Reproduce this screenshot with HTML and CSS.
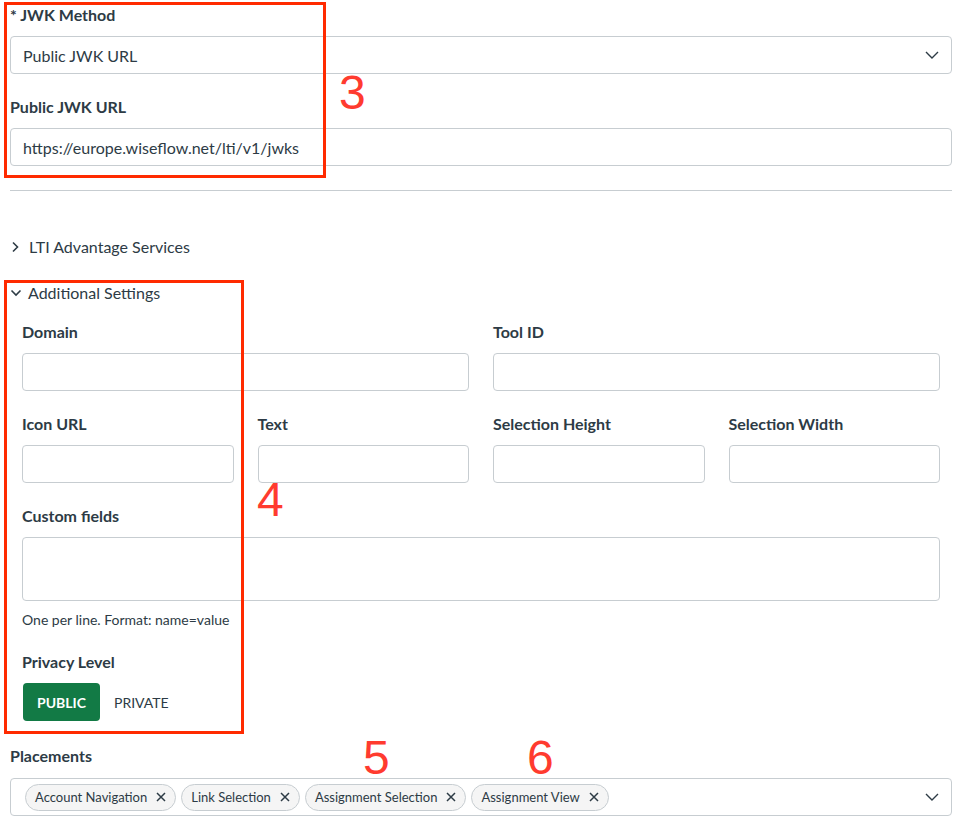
FILE: index.html
```html
<!DOCTYPE html>
<html>
<head>
    <title>LTI Key Settings</title>
    <link rel="stylesheet" href="styles.css">
</head>
<body>
    <div class="page">
        <div class="field">
            <label class="label">* JWK Method</label>
            <div class="select">
                <span>Public JWK URL</span>
                <svg class="chev" width="14" height="8" viewBox="0 0 14 8"><path d="M1 1l6 6 6-6" fill="none" stroke="#2d3b45" stroke-width="1.4"/></svg>
            </div>
        </div>
        <div class="field">
            <label class="label">Public JWK URL</label>
            <div class="input">https://europe.wiseflow.net/lti/v1/jwks</div>
        </div>

        <hr class="divider">

        <div class="toggle">
            <svg width="8" height="12" viewBox="0 0 8 12"><path d="M2 1.5l4.5 4.5L2 10.5" fill="none" stroke="#2d3b45" stroke-width="1.6"/></svg>
            <span>LTI Advantage Services</span>
        </div>

        <div class="toggle open">
            <svg width="12" height="8" viewBox="0 0 12 8"><path d="M1.5 1.5L6 6l4.5-4.5" fill="none" stroke="#2d3b45" stroke-width="1.6"/></svg>
            <span>Additional Settings</span>
        </div>

        <div class="settings">
            <div class="row two">
                <div class="field">
                    <label class="label">Domain</label>
                    <div class="input"></div>
                </div>
                <div class="field">
                    <label class="label">Tool ID</label>
                    <div class="input"></div>
                </div>
            </div>
            <div class="row four">
                <div class="field">
                    <label class="label">Icon URL</label>
                    <div class="input"></div>
                </div>
                <div class="field">
                    <label class="label">Text</label>
                    <div class="input"></div>
                </div>
                <div class="field">
                    <label class="label">Selection Height</label>
                    <div class="input"></div>
                </div>
                <div class="field">
                    <label class="label">Selection Width</label>
                    <div class="input"></div>
                </div>
            </div>
            <div class="field">
                <label class="label">Custom fields</label>
                <div class="textarea"></div>
                <div class="hint">One per line. Format: name=value</div>
            </div>
            <div class="field last">
                <label class="label">Privacy Level</label>
                <div class="privacy">
                    <button class="btn active">PUBLIC</button>
                    <button class="btn">PRIVATE</button>
                </div>
            </div>
        </div>

        <div class="field">
            <label class="label wide">Placements</label>
            <div class="select multi">
                <div class="tags">
                    <span class="tag">Account Navigation <svg width="10" height="10" viewBox="0 0 10 10"><path d="M1 1l8 8M9 1l-8 8" stroke="#2d3b45" stroke-width="1.5"/></svg></span>
                    <span class="tag">Link Selection <svg width="10" height="10" viewBox="0 0 10 10"><path d="M1 1l8 8M9 1l-8 8" stroke="#2d3b45" stroke-width="1.5"/></svg></span>
                    <span class="tag">Assignment Selection <svg width="10" height="10" viewBox="0 0 10 10"><path d="M1 1l8 8M9 1l-8 8" stroke="#2d3b45" stroke-width="1.5"/></svg></span>
                    <span class="tag">Assignment View <svg width="10" height="10" viewBox="0 0 10 10"><path d="M1 1l8 8M9 1l-8 8" stroke="#2d3b45" stroke-width="1.5"/></svg></span>
                </div>
                <svg class="chev" width="14" height="8" viewBox="0 0 14 8"><path d="M1 1l6 6 6-6" fill="none" stroke="#2d3b45" stroke-width="1.4"/></svg>
            </div>
        </div>
    </div>

    <div class="mark box3"></div>
    <div class="mark box4"></div>
    <div class="num n3">3</div>
    <div class="num n4">4</div>
    <div class="num n5">5</div>
    <div class="num n6">6</div>
</body>
</html>
```

FILE: styles.css
```css
body {
    margin: 0;
    font-family: Lato, "Liberation Sans", sans-serif;
    color: #2d3b45;
    background: white;
}
.page {
    width: 942px;
    padding: 5px 0 0 10px;
}
.field {
    margin-bottom: 23px;
}
.field.last {
    margin-bottom: 25px;
}
.label {
    display: block;
    font-size: 16px;
    font-weight: bold;
    line-height: 20px;
    margin-bottom: 11px;
}
.label.wide {
    margin-bottom: 12px;
}
.input, .select, .textarea {
    box-sizing: border-box;
    height: 38px;
    border: 1px solid #c7cdd1;
    border-radius: 4px;
    padding: 0 12px;
    font-size: 16px;
    display: flex;
    align-items: center;
}
.select {
    justify-content: space-between;
}
.textarea {
    height: 64px;
}
.hint {
    font-size: 14px;
    line-height: 18px;
    margin-top: 10px;
}
.divider {
    border: none;
    border-top: 1px solid #c7cdd1;
    margin: 24px 0 46px;
}
.toggle {
    display: flex;
    align-items: center;
    gap: 10px;
    font-size: 16px;
    line-height: 20px;
    margin-bottom: 26px;
}
.toggle svg {
    margin-left: 1px;
}
.toggle.open {
    gap: 6px;
    margin-bottom: 19px;
}
.toggle.open svg {
    margin-left: 0;
}
.settings {
    padding: 0 12px;
}
.row {
    display: grid;
    gap: 24px;
}
.row.two {
    grid-template-columns: 1fr 1fr;
}
.row.four {
    grid-template-columns: repeat(4, 1fr);
}
.privacy {
    display: flex;
    align-items: center;
}
.btn {
    font-family: Lato, "Liberation Sans", sans-serif;
    font-size: 14px;
    height: 38px;
    padding: 0 14px;
    border: none;
    border-radius: 4px;
    background: none;
    color: #2d3b45;
}
.btn.active {
    background: #127a45;
    color: white;
    font-weight: bold;
    margin-left: 1px;
}
.multi {
    padding: 0 12px 0 14px;
}
.tags {
    display: flex;
    gap: 5px;
}
.tag {
    box-sizing: border-box;
    height: 27px;
    display: flex;
    align-items: center;
    gap: 9px;
    padding: 0 9px;
    font-size: 13px;
    background: #f5f5f5;
    border: 1px solid #c7cdd1;
    border-radius: 14px;
}
.mark {
    position: absolute;
    border: 3px solid #ff2a00;
}
.box3 {
    left: 4px;
    top: 2px;
    width: 316px;
    height: 170px;
}
.box4 {
    left: 4px;
    top: 280px;
    width: 234px;
    height: 448px;
}
.num {
    position: absolute;
    font-family: "Liberation Sans", sans-serif;
    font-size: 48px;
    line-height: 48px;
    color: #ff3b2f;
}
.n3 { left: 339px; top: 69px; }
.n4 { left: 257px; top: 476px; }
.n5 { left: 363px; top: 734px; }
.n6 { left: 527px; top: 734px; }
```
